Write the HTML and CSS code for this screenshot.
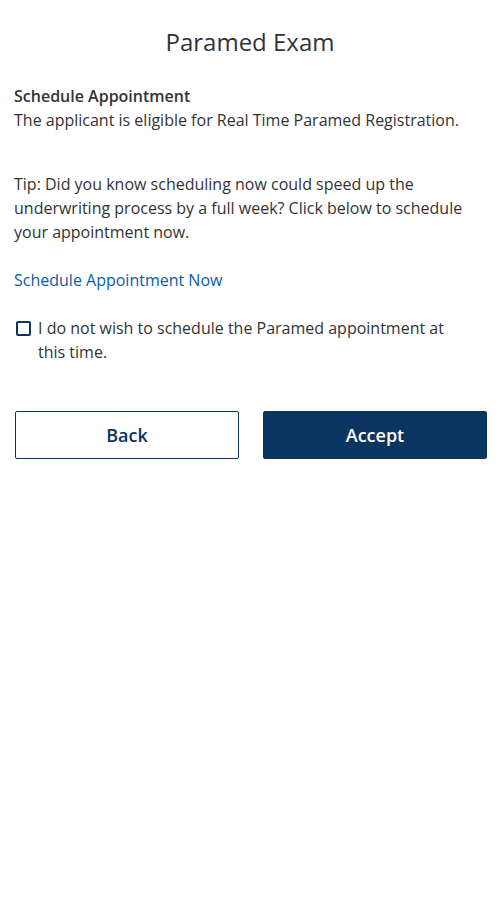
FILE: index.html
```html
<!DOCTYPE html>
<html lang="en">
<head>
<meta charset="utf-8">
<title>Paramed Exam</title>
<link rel="stylesheet" href="styles.css">
</head>
<body>
<main class="page">
  <h1 class="title">Paramed Exam</h1>
  <section class="intro">
    <h2 class="subtitle">Schedule Appointment</h2>
    <p class="text">The applicant is eligible for Real Time Paramed Registration.</p>
  </section>
  <p class="text tip">Tip: Did you know scheduling now could speed up the underwriting process by a full week? Click below to schedule your appointment now.</p>
  <a class="link" href="#">Schedule Appointment Now</a>
  <label class="check">
    <span class="box"></span>
    <span class="check-text">I do not wish to schedule the Paramed appointment at this time.</span>
  </label>
  <div class="actions">
    <button class="btn btn-outline" type="button">Back</button>
    <button class="btn btn-solid" type="button">Accept</button>
  </div>
</main>
</body>
</html>
```

FILE: styles.css
```css
* { box-sizing: border-box; }
html, body { margin: 0; padding: 0; background: #fff; }
body {
  font-family: "Open Sans", "Noto Sans", sans-serif;
  color: #333333;
  font-size: 16px;
  line-height: 24px;
}
.page {
  display: flex;
  flex-direction: column;
  padding: 27px 14px 0 14px;
}
.title {
  margin: 0;
  font-size: 24px;
  font-weight: 400;
  line-height: 30px;
  text-align: center;
  color: #333333;
}
.intro { margin-top: 27px; }
.subtitle {
  margin: 0;
  font-size: 16px;
  font-weight: 600;
  line-height: 24px;
}
.text { margin: 0; }
.tip { margin-top: 40px; }
.link {
  margin-top: 24px;
  color: #0b5ca8;
  text-decoration: none;
  align-self: flex-start;
}
.check {
  display: flex;
  align-items: flex-start;
  gap: 7px;
  margin-top: 24px;
  padding-left: 2px;
  padding-right: 30px;
}
.box {
  flex: none;
  width: 15px;
  height: 15px;
  margin-top: 5px;
  border: 2px solid #0a3560;
  border-radius: 2px;
}
.actions {
  display: flex;
  gap: 24px;
  margin-top: 47px;
  padding-left: 1px;
  margin-right: -1px;
}
.btn {
  flex: 1;
  height: 48px;
  font-family: "Open Sans", "Noto Sans", sans-serif;
  font-size: 18px;
  font-weight: 600;
  border-radius: 2px;
  cursor: pointer;
}
.btn-outline {
  background: #fff;
  color: #0a3560;
  border: 1px solid #0a3560;
}
.btn-solid {
  background: #0a3560;
  color: #fff;
  border: 1px solid #0a3560;
}
```
